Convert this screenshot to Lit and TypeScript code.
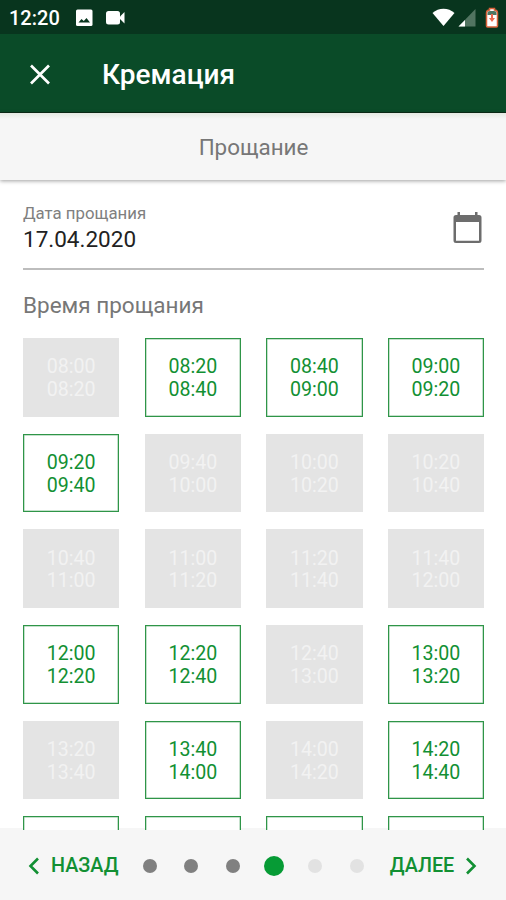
import { LitElement, html, css, nothing } from "lit";
import { customElement, property } from "lit/decorators.js";
import { classMap } from "lit/directives/class-map.js";

interface Slot {
  from: string;
  to: string;
  free: boolean;
}

const clock = (minutes: number) =>
  `${String(Math.floor(minutes / 60)).padStart(2, "0")}:${String(minutes % 60).padStart(2, "0")}`;

// One digit per 20-minute slot starting at 08:00; 1 means available.
const slots: Slot[] = [..."01111000000011010101"].map((flag, i) => ({
  from: clock(480 + i * 20),
  to: clock(500 + i * 20),
  free: flag === "1",
}));

// Top edges of the next row, peeking out above the footer.
const peeking: Slot[] = Array.from({ length: 4 }, () => ({ from: "", to: "", free: true }));

@customElement("time-slot")
export class TimeSlot extends LitElement {
  @property({ attribute: false }) slotData!: Slot;

  static styles = css`
    :host { display: block; }
    .tile {
      box-sizing: border-box;
      height: 100%;
      display: flex;
      flex-direction: column;
      justify-content: center;
      align-items: center;
      padding-top: 3px;
      font-size: 19.6px;
      line-height: 22.7px;
      background: #e4e4e4;
      color: #f2f2f2;
    }
    .free {
      background: #fff;
      color: #129033;
      border: 1px solid #2f9548;
      box-shadow: inset 0 0 0 0.5px #8cc49a;
    }
  `;

  render() {
    const { from, to, free } = this.slotData;
    return html`<div class=${classMap({ tile: true, free })}>
      ${from ? html`<span>${from}</span><span>${to}</span>` : nothing}
    </div>`;
  }
}

@customElement("app-root")
export class AppRoot extends LitElement {
  static styles = css`
    :host {
      display: flex;
      flex-direction: column;
      height: 900px;
      overflow: hidden;
      background: #fff;
      font-family: Roboto, "Liberation Sans", sans-serif;
    }
    svg { display: block; flex: none; }
    .status {
      flex: none;
      height: 34px;
      box-sizing: border-box;
      background: #08351e;
      color: #fff;
      display: flex;
      align-items: center;
      padding: 1px 7px 0 9px;
    }
    .time { font-size: 20px; font-weight: 500; width: 66px; }
    .spacer { flex: 1; }
    .video { margin-left: 12px; }
    .signal { margin-left: 3px; }
    .battery { margin-left: 9px; }
    .bar {
      flex: none;
      height: 79px;
      box-sizing: border-box;
      background: #0a4b28;
      border-bottom: 1px solid #0b2c18;
      color: #fff;
      display: flex;
      align-items: center;
      padding: 2px 0 0 29px;
    }
    .title { margin-left: 52px; font-size: 28px; font-weight: 500; }
    .step {
      flex: none;
      height: 67px;
      box-sizing: border-box;
      background: linear-gradient(#e4e9e2, #f6f6f6 6px);
      box-shadow: 0 1px 4px rgba(0, 0, 0, 0.38);
      display: flex;
      align-items: center;
      justify-content: center;
      padding: 1px 0 0 1px;
      font-size: 22.4px;
      color: #777;
    }
    .content {
      flex: 1;
      min-height: 0;
      overflow: hidden;
      padding: 23px 22px 0 23px;
      position: relative;
      z-index: 1;
    }
    .field {
      display: flex;
      justify-content: space-between;
      height: 65px;
      border-bottom: 2px solid #bdbdbd;
    }
    .label { font-size: 16.8px; line-height: 20px; color: #808080; }
    .date { font-size: 22.5px; line-height: 32px; color: #222; }
    .calendar { margin: 8px 2px 0 0; }
    .heading {
      font-size: 22.5px;
      line-height: 30px;
      margin: 20px 0 18px;
      color: #777;
    }
    .grid {
      display: grid;
      grid-template-columns: repeat(4, 96.4px);
      grid-auto-rows: 78.7px;
      column-gap: 25.2px;
      row-gap: 17px;
    }
    .footer {
      flex: none;
      height: 72px;
      margin-top: -2px;
      box-sizing: border-box;
      background: #f6f6f6;
      color: #129033;
      display: flex;
      align-items: center;
      padding: 3px 28px 0;
      font-size: 19.8px;
      font-weight: 500;
    }
    .back, .next { display: flex; align-items: center; }
    .back { gap: 11px; width: 115.2px; }
    .next { gap: 11px; margin-left: 26px; }
    .dots { display: flex; align-items: center; gap: 27.3px; }
    .dot { width: 14px; height: 14px; border-radius: 50%; background: #808080; }
    .current { width: 20px; height: 20px; margin: 0 -3px; background: #069b35; }
    .ahead { background: #e2e2e2; }
  `;

  render() {
    return html`
      <div class="status">
        <span class="time">12:20</span>
        <svg width="18" height="18" viewBox="0 0 18 18">
          <rect x="1" y="0.500" width="16.500" height="16.500" rx="1.500" fill="#fff" />
          <path d="M3.500 13.500l3-3.500 2.300 2 2.700-3 3.500 4.500z" fill="#08351e" />
        </svg>
        <svg class="video" width="21" height="18" viewBox="0 0 21 18">
          <rect x="1" y="2" width="14" height="13.500" rx="2.500" fill="#fff" />
          <path d="M15 7.500l4.500-4.500v11.500l-4.500-4.500z" fill="#fff" />
        </svg>
        <span class="spacer"></span>
        <svg width="23" height="20" viewBox="0 0 23 20">
          <path d="M.5 5C6.500-.7 16.500-.7 22.500 5L11.500 18z" fill="#fff" />
        </svg>
        <svg class="signal" width="18" height="20" viewBox="0 0 18 20">
          <path d="M17.500 1V18.500H.5z" fill="#527461" />
          <path d="M7 12V18.500H.5z" fill="#fff" />
        </svg>
        <svg class="battery" width="14" height="22" viewBox="0 0 14 22">
          <path d="M4.500 3V1.500h5V3q3 .3 3 3v13q0 1-1 1h-9q-1 0-1-1V6q0-2.700 3-3z" fill="#fff" stroke="#d9623a" stroke-width="1.500" />
          <path d="M2.500 8V6q0-2 2.500-2h4q2.500 0 2.500 2v2z" fill="#4f7662" />
          <path d="M6 7h2v4h2L7 15l-3-4h2z" fill="#ee6a50" />
        </svg>
      </div>
      <div class="bar">
        <svg width="21" height="21" viewBox="0 0 21 21">
          <path d="M2 1.500l18 18M20 1.500L2 19.500" stroke="#fff" stroke-width="2.700" />
        </svg>
        <span class="title">Кремация</span>
      </div>
      <div class="step">Прощание</div>
      <div class="content">
        <div class="field">
          <div>
            <div class="label">Дата прощания</div>
            <div class="date">17.04.2020</div>
          </div>
          <svg class="calendar" width="29" height="33" viewBox="0 0 29 33">
            <path d="M4.500 1h2.500v3h15V1h2.500v3H26q2.500 0 2.500 2.500v23q0 2.500-2.500 2.500H3Q.5 32 .5 29.500V6.500Q.5 4 3 4h1.500zM3 11v18.800h23V11z" fill="#6d6d6d" fill-rule="evenodd" />
          </svg>
        </div>
        <div class="heading">Время прощания</div>
        <div class="grid">
          ${[...slots, ...peeking].map((s) => html`<time-slot .slotData=${s}></time-slot>`)}
        </div>
      </div>
      <div class="footer">
        <div class="back">
          <svg width="12" height="18" viewBox="0 0 12 18">
            <path d="M10 1.500L2.500 9l7.500 7.500" fill="none" stroke="#129033" stroke-width="2.600" />
          </svg>
          <span>НАЗАД</span>
        </div>
        <div class="dots">
          ${[0, 1, 2, 3, 4, 5].map(
            (i) => html`<span class=${classMap({ dot: true, current: i === 3, ahead: i > 3 })}></span>`,
          )}
        </div>
        <div class="next">
          <span>ДАЛЕЕ</span>
          <svg width="12" height="18" viewBox="0 0 12 18">
            <path d="M2 1.500L9.500 9 2 16.500" fill="none" stroke="#129033" stroke-width="2.600" />
          </svg>
        </div>
      </div>
    `;
  }
}
